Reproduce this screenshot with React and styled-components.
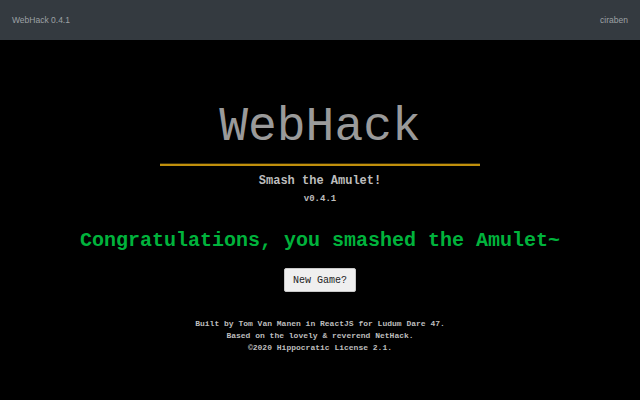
import React from "react";
import styled, { createGlobalStyle } from "styled-components";

const Global = createGlobalStyle`
  html, body { margin: 0; padding: 0; background: #000; }
  body { width: 640px; height: 400px; overflow: hidden; }
`;

const Page = styled.div`
  width: 640px;
  height: 400px;
  background: #000;
  display: flex;
  flex-direction: column;
`;

const Header = styled.header`
  height: 40px;
  flex: none;
  background: #343a40;
  display: flex;
  align-items: center;
  justify-content: space-between;
  padding: 0 12px;
  font-family: "Liberation Sans", Arial, sans-serif;
  font-size: 8.5px;
  color: #9da1a5;
`;

const Main = styled.main`
  display: flex;
  flex-direction: column;
  align-items: center;
  padding-top: 63px;
  font-family: "Liberation Mono", "Courier New", monospace;
  text-align: center;
`;

const Title = styled.h1`
  margin: 0;
  font-size: 48px;
  line-height: 48px;
  font-weight: normal;
  color: #9a9a9a;
`;

const Divider = styled.div`
  width: 320px;
  height: 2px;
  margin-top: 12px;
  border-top: 1px solid #3d2f08;
  background: #c0900c;
`;

const Subtitle = styled.div`
  margin-top: 7px;
  font-size: 12px;
  line-height: 16px;
  font-weight: bold;
  color: #bdbdbd;
`;

const Version = styled.div`
  margin-top: 4px;
  font-size: 9px;
  line-height: 12px;
  font-weight: bold;
  color: #bdbdbd;
`;

const Message = styled.div`
  margin-top: 23px;
  font-size: 20px;
  line-height: 26px;
  font-weight: bold;
  color: #00b33c;
`;

const Button = styled.button`
  margin-top: 14px;
  height: 24px;
  padding: 0 8px;
  font-family: "Liberation Mono", "Courier New", monospace;
  font-size: 10px;
  color: #222;
  background: #efefef;
  border: 1px solid #c8c8c8;
  border-radius: 2px;
  cursor: pointer;
`;

const Credits = styled.div`
  margin-top: 26px;
  font-size: 8px;
  line-height: 12px;
  font-weight: bold;
  color: #bdbdbd;
`;

export default function App() {
  return (
    <Page>
      <Global />
      <Header>
        <span>WebHack 0.4.1</span>
        <span>ciraben</span>
      </Header>
      <Main>
        <Title>WebHack</Title>
        <Divider />
        <Subtitle>Smash the Amulet!</Subtitle>
        <Version>v0.4.1</Version>
        <Message>Congratulations, you smashed the Amulet~</Message>
        <Button>New Game?</Button>
        <Credits>
          Built by Tom Van Manen in ReactJS for Ludum Dare 47.
          <br />
          Based on the lovely &amp; reverend NetHack.
          <br />
          ©2020 Hippocratic License 2.1.
        </Credits>
      </Main>
    </Page>
  );
}
